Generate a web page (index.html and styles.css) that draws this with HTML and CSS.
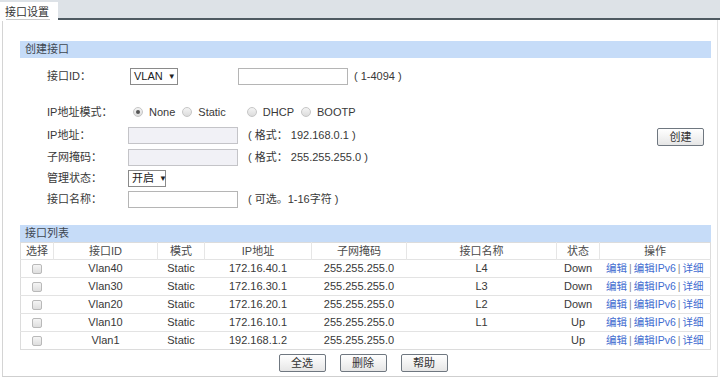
FILE: index.html
```html
<!DOCTYPE html>
<html lang="zh">
<head>
<meta charset="utf-8">
<link rel="stylesheet" href="styles.css">
</head>
<body>
<div class="page">
  <div class="tabbar"><div class="tab">接口设置</div></div>
  <div class="frame">
    <section class="panel">
      <div class="phead">创建接口</div>
      <div class="formwrap">
        <div class="form">
          <div class="row r1">
            <span class="lbl">接口ID：</span>
            <span class="sel sel-vlan">VLAN <i>▼</i></span>
            <span class="inp inp-id"></span>
            <span class="hint">( 1-4094 )</span>
          </div>
          <div class="row r2">
            <span class="lbl">IP地址模式：</span>
            <span class="radios">
              <span class="radio on"></span><span class="rtxt w-none">None</span>
              <span class="radio"></span><span class="rtxt w-static">Static</span>
              <span class="radio"></span><span class="rtxt w-dhcp">DHCP</span>
              <span class="radio"></span><span class="rtxt">BOOTP</span>
            </span>
          </div>
          <div class="row">
            <span class="lbl">IP地址：</span>
            <span class="inp dis"></span>
            <span class="hint">( 格式： 192.168.0.1 )</span>
          </div>
          <div class="row">
            <span class="lbl">子网掩码：</span>
            <span class="inp dis"></span>
            <span class="hint">( 格式： 255.255.255.0 )</span>
          </div>
          <div class="row r5">
            <span class="lbl">管理状态：</span>
            <span class="sel sel-state">开启 <i>▼</i></span>
          </div>
          <div class="row">
            <span class="lbl">接口名称：</span>
            <span class="inp"></span>
            <span class="hint">( 可选。1-16字符 )</span>
          </div>
        </div>
        <button class="btn btn-create">创建</button>
      </div>
    </section>
    <section class="panel list">
      <div class="phead">接口列表</div>
      <table class="grid">
        <thead>
          <tr>
            <th class="c-sel">选择</th><th class="c-id">接口ID</th><th class="c-mode">模式</th><th class="c-ip">IP地址</th><th class="c-mask">子网掩码</th><th class="c-name">接口名称</th><th class="c-st">状态</th><th class="c-op">操作</th>
          </tr>
        </thead>
        <tbody>
          <tr><td><span class="cb"></span></td><td>Vlan40</td><td>Static</td><td>172.16.40.1</td><td>255.255.255.0</td><td>L4</td><td>Down</td><td class="ops"><a>编辑</a><span class="sep">|</span><a>编辑IPv6</a><span class="sep">|</span><a>详细</a></td></tr>
          <tr><td><span class="cb"></span></td><td>Vlan30</td><td>Static</td><td>172.16.30.1</td><td>255.255.255.0</td><td>L3</td><td>Down</td><td class="ops"><a>编辑</a><span class="sep">|</span><a>编辑IPv6</a><span class="sep">|</span><a>详细</a></td></tr>
          <tr><td><span class="cb"></span></td><td>Vlan20</td><td>Static</td><td>172.16.20.1</td><td>255.255.255.0</td><td>L2</td><td>Down</td><td class="ops"><a>编辑</a><span class="sep">|</span><a>编辑IPv6</a><span class="sep">|</span><a>详细</a></td></tr>
          <tr><td><span class="cb"></span></td><td>Vlan10</td><td>Static</td><td>172.16.10.1</td><td>255.255.255.0</td><td>L1</td><td>Up</td><td class="ops"><a>编辑</a><span class="sep">|</span><a>编辑IPv6</a><span class="sep">|</span><a>详细</a></td></tr>
          <tr><td><span class="cb"></span></td><td>Vlan1</td><td>Static</td><td>192.168.1.2</td><td>255.255.255.0</td><td></td><td>Up</td><td class="ops"><a>编辑</a><span class="sep">|</span><a>编辑IPv6</a><span class="sep">|</span><a>详细</a></td></tr>
        </tbody>
      </table>
      <div class="actions">
        <button class="btn">全选</button>
        <button class="btn">删除</button>
        <button class="btn">帮助</button>
      </div>
    </section>
  </div>
</div>
</body>
</html>
```

FILE: styles.css
```css
* { box-sizing: border-box; }
html, body { margin: 0; padding: 0; background: #fff; }
body {
  font-family: "Liberation Sans", Arial, "Noto Sans CJK SC", sans-serif;
  font-size: 11px;
  line-height: 13px;
  color: #383838;
  width: 720px;
  height: 378px;
  overflow: hidden;
}
.page { width: 720px; height: 378px; }

.tabbar {
  height: 20px;
  background: #dde2e7;
  border-bottom: 2px solid #4e5a62;
  position: relative;
}
.tab {
  position: absolute;
  left: 0;
  top: 2px;
  width: 58px;
  height: 19px;
  background: #fff;
  padding: 4px 0 0 5px;
  font-size: 11px;
  color: #333;
}
.tab::after {
  content: "";
  position: absolute;
  left: 6px;
  right: 8px;
  bottom: 1px;
  height: 1px;
  background: #c9c9c9;
}

.frame {
  margin-left: 2px;
  width: 716px;
  height: 357px;
  border-left: 1px solid #d4d4d4;
  border-right: 1px solid #e2e2e2;
  border-bottom: 1px solid #cfcfcf;
  padding: 21px 6px 0 17px;
}

.phead {
  height: 17px;
  line-height: 17px;
  background: #c6dcf8;
  color: #3e4650;
  padding-left: 5px;
}

.formwrap {
  display: flex;
  padding: 9px 0 0 0;
}
.form { flex: 1; padding-left: 27px; }
.row {
  display: flex;
  align-items: center;
  height: 22px;
  white-space: nowrap;
}
.row.r1 { height: 18px; margin-bottom: 16px; }
.row.r2 { height: 22px; margin-bottom: 1px; }
.row.r5 { height: 20px; }
.lbl { width: 81px; flex: none; }
.hint { margin-left: 10px; }

.inp {
  display: inline-block;
  width: 110px;
  height: 17px;
  border: 1px solid #b5b5b5;
  background: #fff;
}
.inp.dis { background: #f1f1f6; border-color: #c4c4c8; }
.inp-id { margin-left: 60px; }
.r1 .hint { margin-left: 6px; }

.sel {
  display: inline-flex;
  align-items: center;
  height: 17px;
  border: 1px solid #8a8a8a;
  background: #fff;
  padding: 0 0 0 3px;
  color: #222;
  white-space: nowrap;
}
.sel i { font-style: normal; font-size: 8px; margin-left: 5px; }
.sel-vlan { width: 48px; margin-left: 2px; }
.sel-state { width: 38px; }

.radios { display: inline-flex; align-items: center; margin-left: 5px; }
.radio {
  width: 10px;
  height: 10px;
  border-radius: 50%;
  border: 1px solid #c6c6c6;
  background: linear-gradient(#f4f4f4, #dcdcdc);
  margin-right: 6px;
  position: relative;
}
.radio.on::after {
  content: "";
  position: absolute;
  left: 2px;
  top: 2px;
  width: 4px;
  height: 4px;
  border-radius: 50%;
  background: #555;
}
.w-none { margin-right: 7px; }
.w-static { margin-right: 21px; }
.w-dhcp { margin-right: 7px; }

.btn {
  font-family: inherit;
  font-size: 11px;
  line-height: 13px;
  color: #333;
  width: 47px;
  height: 18px;
  padding: 0;
  border: 1px solid #6f7780;
  border-radius: 2px;
  background: linear-gradient(#ffffff, #e6e6e6);
}
.btn-create { margin-right: 7px; margin-top: 61px; align-self: flex-start; }

.list { margin-top: 15px; }
.grid {
  width: 100%;
  border-collapse: collapse;
  border: 1px solid #dcdcdc;
  table-layout: fixed;
}
.grid th {
  font-weight: normal;
  color: #4a4a4a;
  height: 17px;
  padding: 0;
  border-left: 1px solid #e6e6e6;
  background: #fff;
}
.grid th:first-child { border-left: none; }
.grid td {
  height: 18px;
  padding: 0;
  text-align: center;
  border-top: 1px solid #e3e3e3;
  white-space: nowrap;
}
.c-sel { width: 33px; }
.c-id { width: 104px; }
.c-mode { width: 47px; }
.c-ip { width: 107px; }
.c-mask { width: 95px; }
.c-name { width: 150px; }
.c-st { width: 43px; }
.c-op { width: 111px; }
.cb {
  display: inline-block;
  width: 10px;
  height: 10px;
  border: 1px solid #b9b9b9;
  border-radius: 2px;
  background: linear-gradient(#f5f5f5, #dedede);
  vertical-align: middle;
}
.ops { font-size: 10.5px; }
.ops a { color: #3f6cd0; }
.ops .sep { color: #8a8a8a; margin: 0 2px; }

.actions {
  display: flex;
  justify-content: center;
  gap: 14px;
  margin-top: 4px;
  padding-right: 5px;
}
```
